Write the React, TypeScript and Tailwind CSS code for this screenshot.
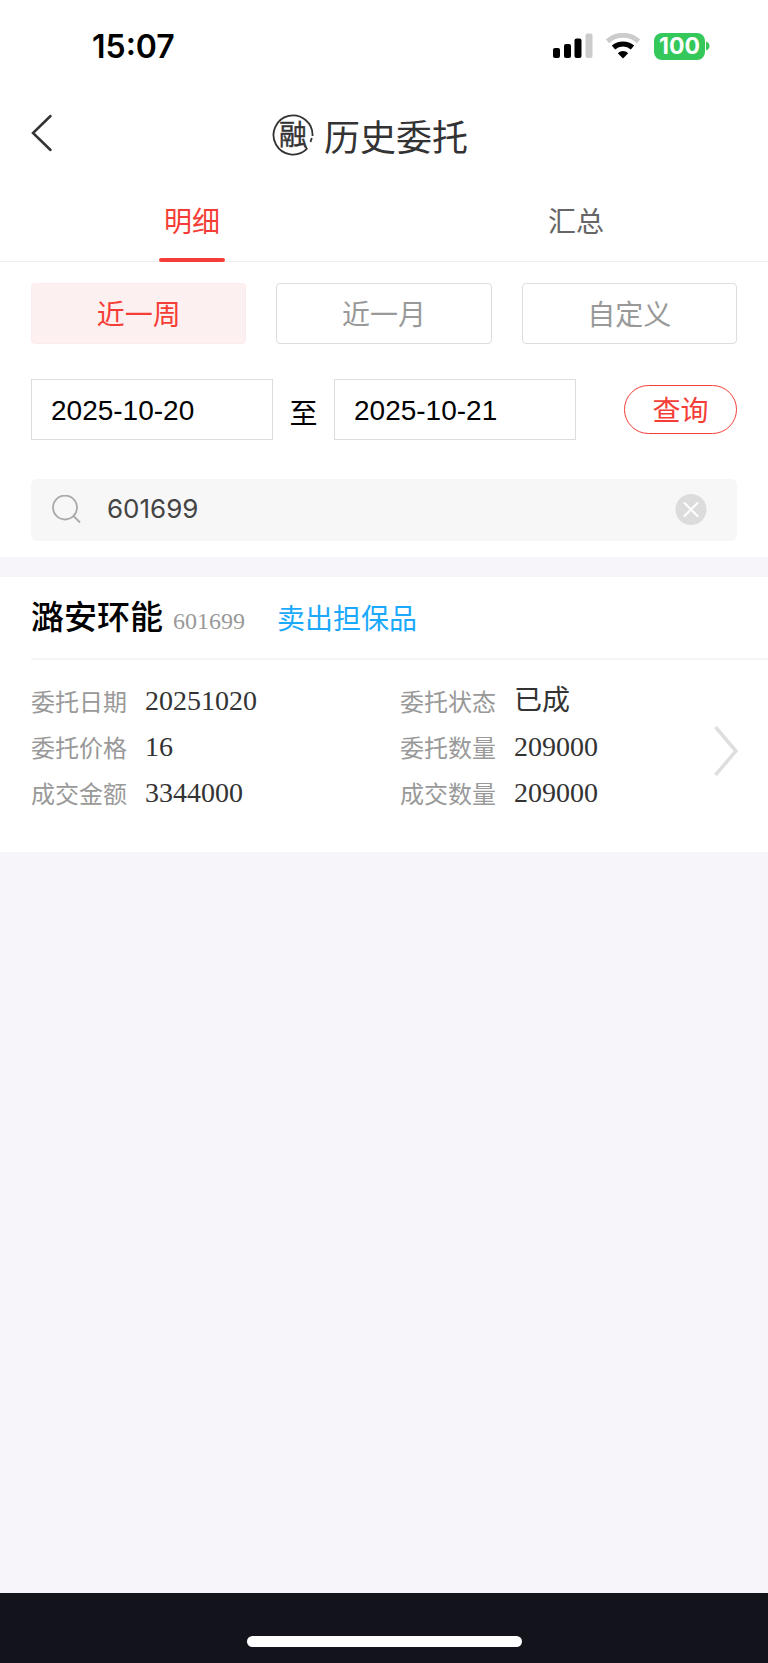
import { useState } from "react";

type TabKey = "detail" | "summary";
type RangeKey = "week" | "month" | "custom";

interface OrderField {
	label: string;
	value: string;
}

interface Order {
	name: string;
	code: string;
	action: string;
	fields: OrderField[];
}

const tabs: { key: TabKey; label: string }[] = [
	{ key: "detail", label: "明细" },
	{ key: "summary", label: "汇总" },
];

const ranges: { key: RangeKey; label: string }[] = [
	{ key: "week", label: "近一周" },
	{ key: "month", label: "近一月" },
	{ key: "custom", label: "自定义" },
];

const orders: Order[] = [
	{
		name: "潞安环能",
		code: "601699",
		action: "卖出担保品",
		fields: [
			{ label: "委托日期", value: "20251020" },
			{ label: "委托状态", value: "已成" },
			{ label: "委托价格", value: "16" },
			{ label: "委托数量", value: "209000" },
			{ label: "成交金额", value: "3344000" },
			{ label: "成交数量", value: "209000" },
		],
	},
];

const SignalIcon = () => (
	<svg width="40" height="26" viewBox="0 0 40 26" aria-hidden="true">
		<rect x="0" y="15" width="7" height="10" rx="2" />
		<rect x="11" y="11" width="7" height="14" rx="2" />
		<rect x="21.500" y="5.500" width="7" height="19.500" rx="2" />
		<rect x="32.500" y="0.500" width="7" height="24.500" rx="2" fill="#cccccc" />
	</svg>
);

const WifiIcon = () => (
	<svg width="34" height="26" viewBox="0 0 34 26" fill="none" aria-hidden="true">
		<path d="M1.500 8.300A23 23 0 0 1 32.500 8.300" stroke="#cccccc" strokeWidth="5" />
		<path d="M7.500 14.500A14.500 14.500 0 0 1 26.500 14.500" stroke="#000" strokeWidth="5" />
		<path d="M17 25.500L11.800 20.200A7.500 7.500 0 0 1 22.200 20.200Z" fill="#000" />
	</svg>
);

const StatusBar = () => (
	<div className="flex h-[92px] items-center justify-between pl-[92px] pr-[58px] font-['Inter',sans-serif]">
		<span className="pt-0.5 text-[32px] font-semibold leading-10 text-black">15:07</span>
		<div className="flex items-center">
			<SignalIcon />
			<span className="ml-[13px] flex">
				<WifiIcon />
			</span>
			<span className="ml-[14px] flex h-[27px] w-[51px] items-center justify-center rounded-lg bg-[#34c759] text-[23px] font-bold leading-none text-white">
				100
			</span>
			<svg className="ml-px" width="4" height="10" viewBox="0 0 4 10" aria-hidden="true">
				<path d="M0 0.500C4.600 1.500 4.600 8.500 0 9.500Z" fill="#34c759" />
			</svg>
		</div>
	</div>
);

// Round seal with the 融 character and a broken ring
const MarginLogo = () => (
	<svg width="42" height="42" viewBox="0 0 42 42" role="img" aria-label="融">
		<path
			d="M40.500 22A19.500 19.500 0 1 0 34.800 34.800L33 31.500"
			fill="none"
			stroke="#333"
			strokeWidth="1.800"
		/>
		<path d="M39.800 24L38.500 28" stroke="#333" strokeWidth="1.800" />
		<text
			x="21"
			y="31"
			textAnchor="middle"
			fontSize="28"
			fill="#333"
			stroke="#333"
			strokeWidth="0.400"
			fontFamily="'Noto Sans CJK SC', sans-serif"
		>
			融
		</text>
	</svg>
);

const OrderCard = ({ order }: { order: Order }) => (
	<article className="bg-white pb-9 pl-[31px]">
		<div className="flex h-[83px] items-baseline border-b-2 border-[#f5f5f5] pt-3.5">
			<h2 className="text-[33px] font-medium leading-[48px] text-black">{order.name}</h2>
			<span className="ml-2.5 font-['Liberation_Serif',serif] text-2xl text-[#999]">
				{order.code}
			</span>
			<span className="ml-8 text-[28px] leading-10 text-[#1ba9fc]">{order.action}</span>
		</div>
		<div className="flex items-center pr-[30px] pt-[18px]">
			<dl className="grid flex-1 grid-cols-[369px_1fr]">
				{order.fields.map((field) => (
					<div key={field.label} className="flex h-[46px] items-center">
						<dt className="w-[114px] text-2xl text-[#999]">{field.label}</dt>
						<dd className="font-['Liberation_Serif','Noto_Sans_CJK_SC',serif] text-[28px] leading-10 text-[#333]">
							{field.value}
						</dd>
					</div>
				))}
			</dl>
			<button type="button" aria-label="查看详情" className="mt-2">
				<svg width="24" height="50" viewBox="0 0 24 50" fill="none">
					<path d="M1.500 1L22 25L1.500 49" stroke="#dedede" strokeWidth="3.500" />
				</svg>
			</button>
		</div>
	</article>
);

const App = () => {
	const [tab, setTab] = useState<TabKey>("detail");
	const [range, setRange] = useState<RangeKey>("week");
	const [startDate, setStartDate] = useState("2025-10-20");
	const [endDate, setEndDate] = useState("2025-10-21");
	const [keyword, setKeyword] = useState("601699");

	return (
		<div className="flex min-h-screen flex-col bg-[#f7f5f9] font-['Noto_Sans_CJK_SC',sans-serif]">
			<div className="bg-white">
				<StatusBar />

				<header className="grid h-[86px] grid-cols-[80px_1fr_80px] items-center">
					<button type="button" aria-label="返回" className="pb-1 pl-[31px]">
						<svg width="22" height="38" viewBox="0 0 22 38" fill="none">
							<path
								d="M19.500 2L2 19L19.500 36"
								stroke="#333"
								strokeWidth="2.500"
								strokeLinecap="round"
							/>
						</svg>
					</button>
					<div className="flex items-center justify-center gap-2.5 pr-7">
						<MarginLogo />
						<h1 className="text-4xl text-[#333]">历史委托</h1>
					</div>
				</header>

				<nav className="grid h-[84px] grid-cols-2 border-b border-[#eee]">
					{tabs.map((item) => (
						<button
							key={item.key}
							type="button"
							onClick={() => setTab(item.key)}
							className={`flex flex-col items-center justify-between pt-[22px] text-[28px] leading-10 ${
								tab === item.key ? "text-[#f53d37]" : "text-[#666]"
							}`}
						>
							{item.label}
							{tab === item.key && (
								<span className="-mb-px h-1 w-[66px] rounded-full bg-[#f53d37]" />
							)}
						</button>
					))}
				</nav>

				<div className="px-[31px] pb-4 pt-[21px]">
					<div className="grid grid-cols-3 gap-[30px]">
						{ranges.map((item) => (
							<button
								key={item.key}
								type="button"
								onClick={() => setRange(item.key)}
								className={`h-[61px] rounded border pb-0.5 text-[28px] leading-10 ${
									range === item.key
										? "border-[#fdebeb] bg-[#fdf0f0] text-[#f53d37]"
										: "border-[#ddd] bg-white text-[#999]"
								}`}
							>
								{item.label}
							</button>
						))}
					</div>

					<div className="mt-[35px] flex items-center">
						<input
							type="text"
							aria-label="开始日期"
							value={startDate}
							onChange={(e) => setStartDate(e.target.value)}
							className="h-[61px] w-[242px] border border-[#ddd] px-[19px] pt-0.5 font-['Liberation_Sans',sans-serif] text-[28px] text-black"
						/>
						<span className="w-[61px] pt-1 text-center text-[28px] leading-10 text-black">
							至
						</span>
						<input
							type="text"
							aria-label="结束日期"
							value={endDate}
							onChange={(e) => setEndDate(e.target.value)}
							className="h-[61px] w-[242px] border border-[#ddd] px-[19px] pt-0.5 font-['Liberation_Sans',sans-serif] text-[28px] text-black"
						/>
						<button
							type="button"
							className="ml-auto h-[49px] w-[113px] rounded-full border border-[#f53d37] pb-0.5 text-[28px] leading-10 text-[#f53d37]"
						>
							查询
						</button>
					</div>

					<div className="mt-[39px] flex h-[62px] items-center rounded-md bg-[#f7f7f7] pl-[21px] pr-[30px]">
						<svg width="30" height="30" viewBox="0 0 30 30" fill="none" aria-hidden="true">
							<circle cx="13" cy="12.500" r="12" stroke="#aaa" strokeWidth="1.800" />
							<path d="M21.500 21L28 27.500" stroke="#aaa" strokeWidth="1.800" />
						</svg>
						<input
							type="text"
							aria-label="证券代码"
							value={keyword}
							onChange={(e) => setKeyword(e.target.value)}
							className="ml-[25px] min-w-0 flex-1 bg-transparent pb-1 font-['Inter','Noto_Sans_CJK_SC',sans-serif] text-[26px] text-[#444]"
						/>
						<button type="button" aria-label="清除" onClick={() => setKeyword("")}>
							<svg width="32" height="32" viewBox="0 0 32 32" fill="none">
								<circle cx="16" cy="15.500" r="15.500" fill="#dcdcdc" />
								<path
									d="M9.500 9L22.500 22M22.500 9L9.500 22"
									stroke="#fff"
									strokeWidth="2"
									strokeLinecap="round"
								/>
							</svg>
						</button>
					</div>
				</div>
			</div>

			<main className="mt-5 flex flex-1 flex-col gap-5">
				{orders.map((order) => (
					<OrderCard key={order.code} order={order} />
				))}
			</main>

			<footer className="flex h-[70px] justify-center bg-[#13131c] pt-[43px]">
				<span className="h-[11px] w-[275px] rounded-full bg-white" />
			</footer>
		</div>
	);
};

export default App;
